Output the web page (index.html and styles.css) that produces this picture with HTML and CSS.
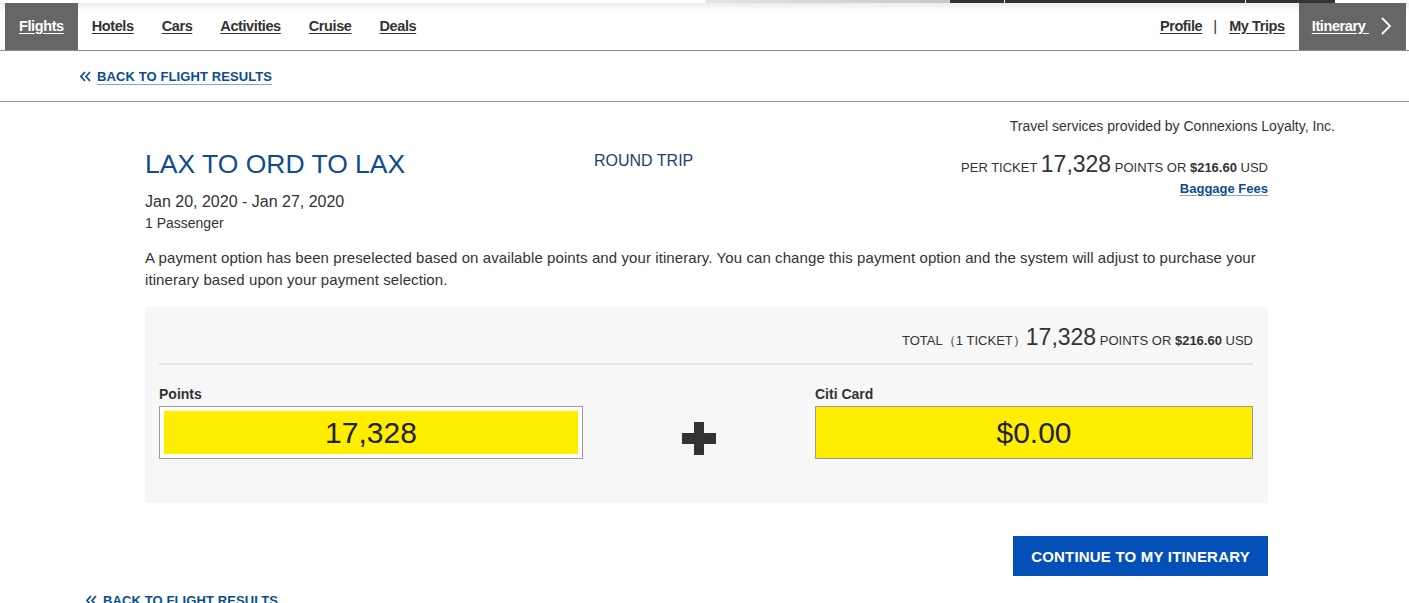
FILE: index.html
```html
<!DOCTYPE html>
<html lang="en">
<head>
<meta charset="utf-8">
<title>Payment Options</title>
<link rel="stylesheet" href="styles.css">
</head>
<body>
<div class="topstrip">
  <span class="seg seg-blank"></span>
  <span class="seg seg-light"></span>
  <span class="seg seg-dark s1"></span>
  <span class="seg seg-dark s2"></span>
  <span class="seg seg-dark s3"></span>
</div>
<nav class="nav">
  <div class="nav-left">
    <a class="nav-item active" href="#">Flights</a>
    <a class="nav-item" href="#">Hotels</a>
    <a class="nav-item" href="#">Cars</a>
    <a class="nav-item" href="#">Activities</a>
    <a class="nav-item" href="#">Cruise</a>
    <a class="nav-item" href="#">Deals</a>
  </div>
  <div class="nav-right">
    <a class="nav-link profile" href="#">Profile</a>
    <span class="nav-sep">|</span>
    <a class="nav-link trips" href="#">My Trips</a>
    <a class="itin-tab" href="#"><span class="itin-text">Itinerary&nbsp;</span>
      <svg class="chev" width="12" height="18" viewBox="0 0 12 18"><polyline points="2,1 10,9 2,17" fill="none" stroke="#fff" stroke-width="1.8"/></svg>
    </a>
  </div>
</nav>
<div class="backbar">
  <a class="back" href="#"><svg class="dchev" width="11" height="11" viewBox="0 0 11 11"><polyline points="5,1 1,5.5 5,10" fill="none" stroke="#0b4d8f" stroke-width="1.7"/><polyline points="10,1 6,5.5 10,10" fill="none" stroke="#0b4d8f" stroke-width="1.7"/></svg><span class="back-text">BACK TO FLIGHT RESULTS</span></a>
</div>
<main class="main">
  <p class="provider">Travel services provided by Connexions Loyalty, Inc.</p>
  <div class="trip-head">
    <div class="trip-left">
      <h1 class="title">LAX TO ORD TO LAX</h1>
      <div class="dates">Jan 20, 2020 - Jan 27, 2020</div>
      <div class="pax">1 Passenger</div>
    </div>
    <div class="trip-type">ROUND TRIP</div>
    <div class="trip-price">
      <div class="per"><span class="sm">PER TICKET</span> <span class="big">17,328</span> <span class="sm">POINTS OR</span> <b class="usd">$216.60</b> <span class="sm">USD</span></div>
      <a class="bag" href="#">Baggage Fees</a>
    </div>
  </div>
  <p class="intro">A payment option has been preselected based on available points and your itinerary. You can change this payment option and the system will adjust to purchase your itinerary based upon your payment selection.</p>
  <section class="paybox">
    <div class="total"><span class="sm">TOTAL（1 TICKET）</span><span class="big">17,328</span> <span class="sm">POINTS OR</span> <b class="usd">$216.60</b> <span class="sm">USD</span></div>
    <div class="pay-grid">
      <div class="field">
        <label class="flabel">Points</label>
        <div class="fbox inset"><span class="fval">17,328</span></div>
      </div>
      <div class="plus">
        <svg width="34" height="33" viewBox="0 0 34 33"><rect x="0" y="11" width="34" height="11" fill="#333"/><rect x="12" y="0" width="10" height="33" fill="#333"/></svg>
      </div>
      <div class="field">
        <label class="flabel">Citi Card</label>
        <div class="fbox"><span class="fval">$0.00</span></div>
      </div>
    </div>
  </section>
  <div class="actions">
    <a class="btn" href="#">CONTINUE TO MY ITINERARY</a>
  </div>
</main>
<div class="backbottom">
  <a class="back" href="#"><svg class="dchev" width="11" height="11" viewBox="0 0 11 11"><polyline points="5,1 1,5.5 5,10" fill="none" stroke="#0b4d8f" stroke-width="1.7"/><polyline points="10,1 6,5.5 10,10" fill="none" stroke="#0b4d8f" stroke-width="1.7"/></svg><span class="back-text">BACK TO FLIGHT RESULTS</span></a>
</div>
</body>
</html>
```
FILE: styles.css
```css
* { box-sizing: border-box; }
html, body { margin: 0; padding: 0; background: #fff; }
body {
  font-family: "Liberation Sans", Arial, sans-serif;
  color: #333;
  overflow: hidden;
}
a { color: inherit; }

.topstrip { display: flex; height: 3px; }
.seg { display: block; height: 3px; }
.seg-blank { width: 706px; }
.seg-light { width: 244px; background: linear-gradient(90deg, #e4e4e4, #c8c8c8); }
.seg-dark { background: #333; }
.s1 { width: 54px; margin-right: 1px; }
.s2 { width: 240px; margin-right: 1px; }
.s3 { width: 89px; }

.nav {
  display: flex;
  justify-content: space-between;
  height: 48px;
  padding: 0 3px 0 5px;
  border-bottom: 1px solid #8c8c8c;
  background: linear-gradient(180deg, #ececec 0, #fafafa 6px, #fff 12px);
}
.nav-left, .nav-right { display: flex; align-items: stretch; }
.nav-item, .nav-link, .itin-tab {
  font-size: 14.5px;
  font-weight: bold;
  letter-spacing: -0.4px;
}
.nav-item {
  display: flex;
  align-items: center;
  padding: 0 14px 1px;
  color: #333;
  text-decoration: underline;
  text-underline-offset: 2px;
}
.nav-item.active { background: #666; color: #fff; }
.nav-link {
  display: flex;
  align-items: center;
  color: #333;
  text-decoration: underline;
  text-underline-offset: 2px;
  padding-bottom: 1px;
}
.profile { padding-right: 11px; }
.trips { padding-left: 12px; padding-right: 14px; }
.nav-sep { display: flex; align-items: center; font-size: 15px; color: #333; padding-bottom: 2px; }
.itin-tab {
  display: flex;
  align-items: center;
  background: #666;
  color: #fff;
  padding: 0 14px 1px 13px;
  text-decoration: none;
}
.itin-text { text-decoration: underline; text-underline-offset: 2px; margin-right: 11px; }
.chev { display: block; }

.backbar {
  height: 51px;
  border-bottom: 1px solid #9a9a9a;
  padding-left: 80px;
  display: flex;
  align-items: center;
}
.back {
  display: inline-flex;
  align-items: center;
  color: #0b4d8f;
  text-decoration: none;
  font-size: 13px;
  font-weight: bold;
  letter-spacing: 0.1px;
}
.dchev { margin-right: 6px; }
.back-text { text-decoration: underline; text-decoration-color: #7fa6cc; text-underline-offset: 3px; }

.main { margin-left: 145px; width: 1123px; padding-top: 14px; }
.provider {
  margin: 0 -67px 0 0;
  text-align: right;
  font-size: 14px;
  line-height: 20px;
  color: #333;
}
.trip-head {
  display: grid;
  grid-template-columns: 449px 1fr auto;
  margin-top: 12px;
}
.title {
  margin: 0;
  font-size: 26.5px;
  line-height: 32px;
  font-weight: normal;
  color: #0f4c8a;
  letter-spacing: 0;
}
.dates { margin-top: 11px; font-size: 16px; line-height: 22px; }
.pax { font-size: 14px; line-height: 20px; }
.trip-type { font-size: 16px; line-height: 22px; color: #1d3f6d; padding-top: 2px; }
.trip-price { text-align: right; padding-top: 2px; font-size: 13px; }
.per { line-height: 28px; height: 28px; white-space: nowrap; font-size: 13px; }
.sm { font-size: 13px; }
.big { font-size: 23px; }
.usd { font-size: 13px; }
.bag {
  display: inline-block;
  margin-top: 4px;
  font-size: 13px;
  font-weight: bold;
  color: #0b4d8f;
  text-decoration: underline;
  text-decoration-color: #7fa6cc;
  text-underline-offset: 2px;
  line-height: 14px;
  vertical-align: top;
}

.intro {
  margin: 14px 0 0;
  font-size: 15px;
  line-height: 22px;
  letter-spacing: 0.09px;
  color: #333;
}

.paybox {
  margin-top: 16px;
  background: #f7f7f7;
  padding: 15px 15px 44px 14px;
}
.total {
  text-align: right;
  font-size: 13px;
  line-height: 30px;
  padding-bottom: 11px;
  box-sizing: content-box;
  height: 30px;
  border-bottom: 2px solid #e3e3e3;
  white-space: nowrap;
}
.pay-grid {
  display: grid;
  grid-template-columns: 424px 1fr 438px;
  margin-top: 20px;
}
.flabel { display: block; font-size: 14px; font-weight: bold; line-height: 18px; color: #333; margin-bottom: 3px; }
.fbox {
  height: 53px;
  border: 1px solid #9a9a9a;
  background: #ffee00;
  display: flex;
  align-items: center;
  justify-content: center;
}
.fbox.inset {
  box-shadow: inset 0 0 0 4px #fff;
}
.fval { font-size: 30px; color: #222; }
.plus { align-self: end; justify-self: center; margin-bottom: 4px; }
.plus svg { display: block; }

.actions { display: flex; justify-content: flex-end; margin-top: 33px; }
.btn {
  display: flex;
  align-items: center;
  justify-content: center;
  width: 255px;
  height: 40px;
  background: #0550b8;
  color: #fff;
  text-decoration: none;
  font-size: 15px;
  font-weight: bold;
  letter-spacing: 0.2px;
}

.backbottom { padding-left: 86px; margin-top: 16px; height: 24px; }
```
